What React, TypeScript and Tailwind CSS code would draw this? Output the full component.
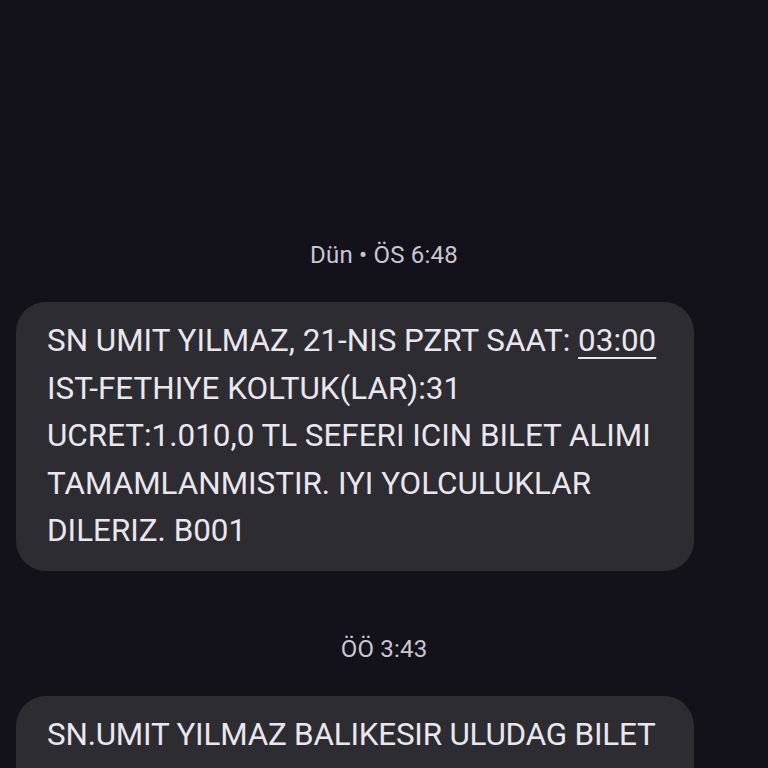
import React from 'react';

const firstMessage = [
  'SN UMIT YILMAZ, 21-NIS PZRT SAAT: ',
  'IST-FETHIYE KOLTUK(LAR):31',
  'UCRET:1.010,0 TL SEFERI ICIN BILET ALIMI',
  'TAMAMLANMISTIR. IYI YOLCULUKLAR',
  'DILERIZ. B001',
];

const Stamp: React.FC<{ text: string }> = ({ text }) => (
  <div className="flex justify-center text-[24px] leading-[30px] text-[#c8c7cf] tracking-[0.2px]">{text}</div>
);

const App: React.FC = () => {
  return (
    <div
      className="w-[768px] h-[768px] overflow-hidden bg-[#13121a] pt-[240px]"
      style={{ fontFamily: 'Roboto, "Noto Sans", sans-serif' }}
    >
      <Stamp text="Dün • ÖS 6:48" />

      <div className="mt-[32px] ml-[16px] w-[678px] rounded-[30px] bg-[#2d2c31] px-[31px] pt-[15px] pb-[16px] text-[31.4px] leading-[47.5px] text-[#e9e7ee]">
        {firstMessage.map((line, i) => (
          <div key={i} className="whitespace-nowrap">
            {line}
            {i === 0 && <span className="underline underline-offset-[6px] decoration-[2px]">03:00</span>}
          </div>
        ))}
      </div>

      <div className="mt-[63px]">
        <Stamp text="ÖÖ 3:43" />
      </div>

      <div className="mt-[32px] ml-[16px] w-[678px] h-[120px] rounded-t-[30px] bg-[#2d2c31] px-[31px] pt-[15px] text-[31.4px] leading-[47.5px] text-[#e9e7ee]">
        <div className="whitespace-nowrap tracking-[-0.2px]">SN.UMIT YILMAZ BALIKESIR ULUDAG BILET</div>
      </div>
    </div>
  );
};

export default App;
